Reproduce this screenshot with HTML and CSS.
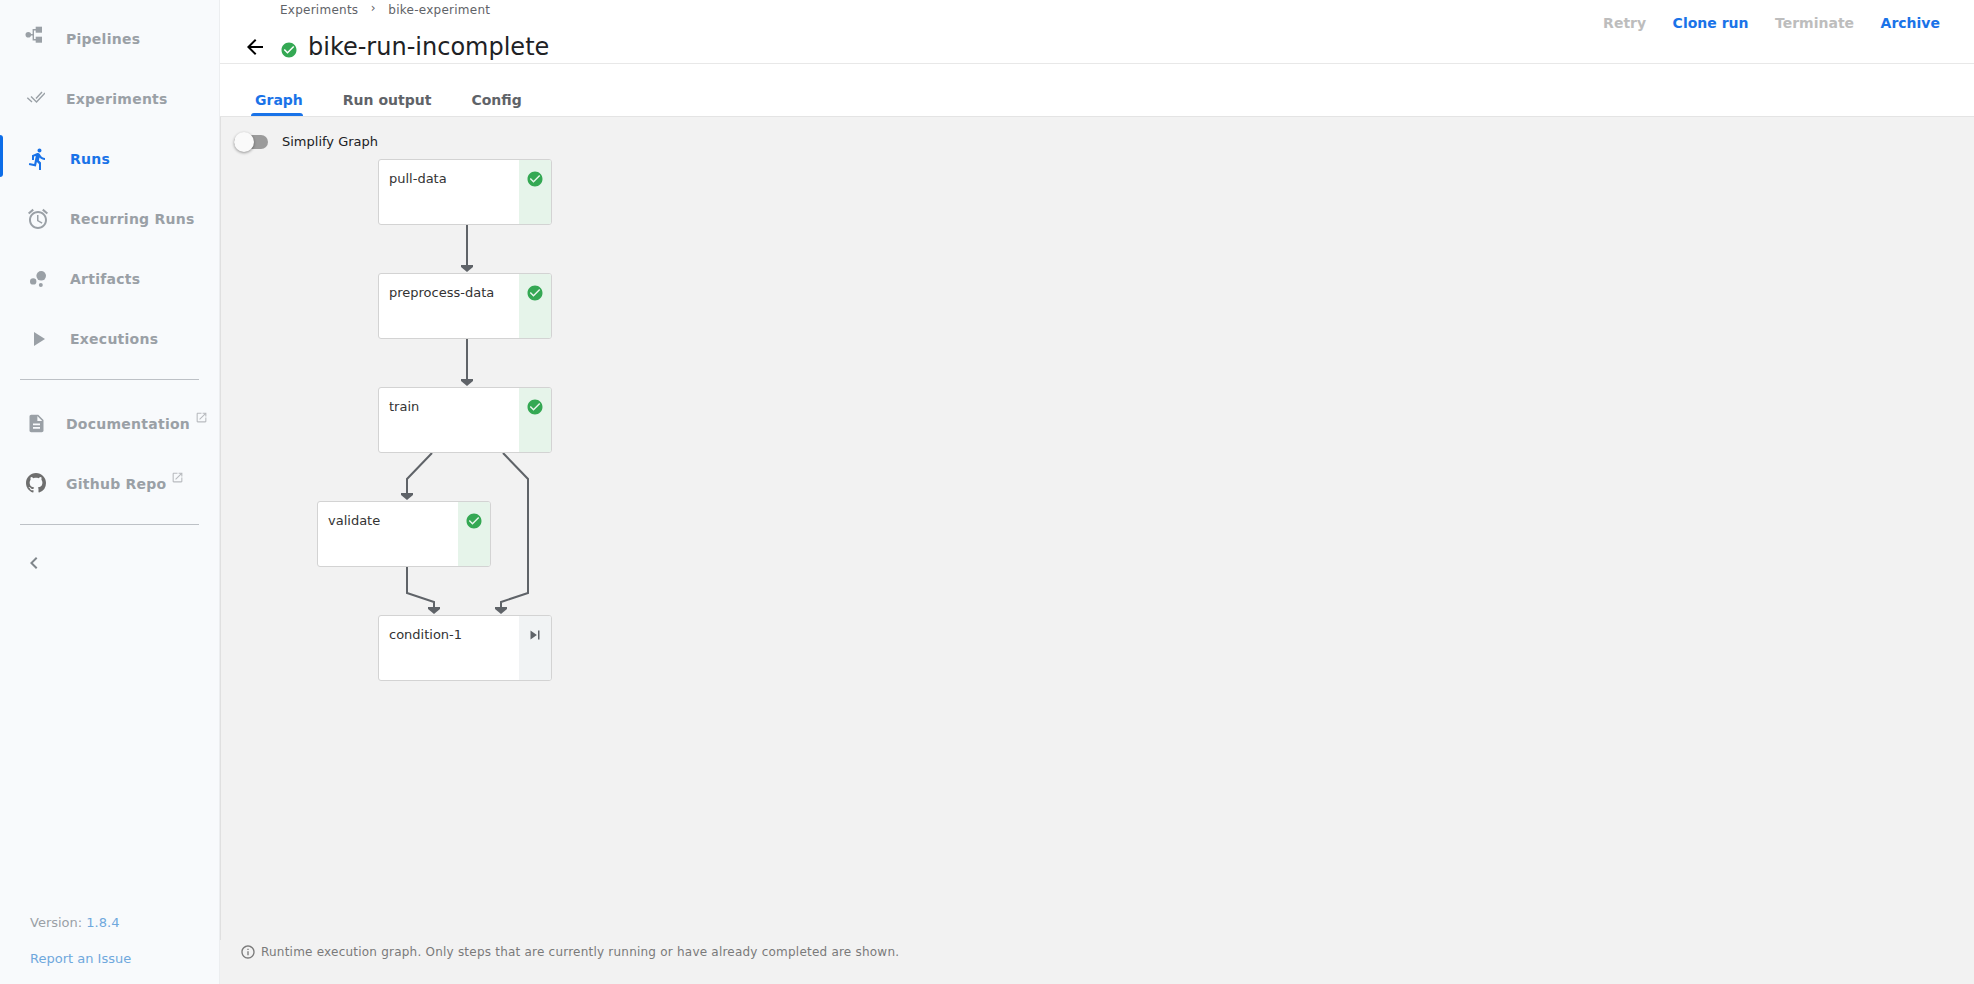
FILE: index.html
```html
<!DOCTYPE html>
<html lang="en">
<head>
<meta charset="utf-8">
<title>bike-run-incomplete</title>
<link rel="stylesheet" href="styles.css">
</head>
<body>
<svg class="defs" width="0" height="0">
  <symbol id="i-check" viewBox="0 0 24 24"><path d="M12 2C6.48 2 2 6.48 2 12s4.48 10 10 10 10-4.48 10-10S17.52 2 12 2zm-2 15l-5-5 1.41-1.41L10 14.17l7.59-7.59L19 8l-9 9z"/></symbol>
  <symbol id="i-open" viewBox="0 0 24 24"><path d="M19 19H5V5h7V3H5c-1.11 0-2 .9-2 2v14c0 1.1.89 2 2 2h14c1.1 0 2-.9 2-2v-7h-2v7zM14 3v2h3.59l-9.83 9.83 1.41 1.41L19 6.41V10h2V3h-7z"/></symbol>
</svg>
<div class="app">
  <nav class="sidebar">
    <a class="nav-item narrow"><span class="nav-icon"><svg class="ic-pipe" viewBox="0 0 20 20"><circle cx="3.3" cy="9.7" r="2.8"/><rect x="10.7" y="1.7" width="6.3" height="6"/><rect x="10.7" y="11.7" width="6.3" height="6"/><path class="wire" d="M6 9.7H8.3M11 4.7H8.3V14.7H11"/></svg></span><span class="nav-label">Pipelines</span></a>
    <a class="nav-item narrow"><span class="nav-icon"><svg class="ic-exp" viewBox="0 0 20 12"><path class="wire" d="M2.3 6.7L7 11M6 5.5L11.5 11L20 2M11 7.5L17 1"/></svg></span><span class="nav-label">Experiments</span></a>
    <a class="nav-item active"><span class="nav-icon"><svg viewBox="0 0 24 24"><path d="M13.49 5.48c1.1 0 2-.9 2-2s-.9-2-2-2-2 .9-2 2 .9 2 2 2zm-3.6 13.9l1-4.4 2.1 2v6h2v-7.5l-2.1-2 .6-3c1.3 1.5 3.3 2.5 5.5 2.5v-2c-1.9 0-3.5-1-4.3-2.4l-1-1.6c-.4-.6-1-1-1.7-1-.3 0-.5.1-.8.1l-5.2 2.2v4.7h2v-3.4l1.8-.7-1.6 8.1-4.9-1-.4 2 7 1.4z"/></svg></span><span class="nav-label">Runs</span></a>
    <a class="nav-item"><span class="nav-icon"><svg viewBox="0 0 24 24"><path d="M22 5.72l-4.6-3.86-1.29 1.53 4.6 3.86L22 5.72zM7.88 3.39L6.6 1.86 2 5.71l1.29 1.53 4.59-3.85zM12.5 8H11v6l4.75 2.85.75-1.23-4-2.37V8zM12 4c-4.97 0-9 4.03-9 9s4.03 9 9 9 9-4.03 9-9-4.03-9-9-9zm0 16c-3.87 0-7-3.13-7-7s3.13-7 7-7 7 3.13 7 7-3.13 7-7 7z"/></svg></span><span class="nav-label">Recurring Runs</span></a>
    <a class="nav-item"><span class="nav-icon"><svg viewBox="0 0 24 24"><circle cx="7.2" cy="14.4" r="3.2"/><circle cx="14.8" cy="18" r="2"/><circle cx="15.2" cy="8.8" r="4.8"/></svg></span><span class="nav-label">Artifacts</span></a>
    <a class="nav-item"><span class="nav-icon"><svg viewBox="0 0 24 24"><path d="M8 5v14l11-7z"/></svg></span><span class="nav-label">Executions</span></a>
    <hr class="nav-rule first">
    <a class="nav-item narrow"><span class="nav-icon"><svg class="ic-doc" viewBox="0 0 24 24"><path d="M14 2H6c-1.1 0-1.99.9-1.99 2L4 20c0 1.1.89 2 1.99 2H18c1.1 0 2-.9 2-2V8l-6-6zm2 16H8v-2h8v2zm0-4H8v-2h8v2zm-3-5V3.5L18.5 9H13z"/></svg></span><span class="nav-label">Documentation</span><svg class="ext"><use href="#i-open"/></svg></a>
    <a class="nav-item narrow"><span class="nav-icon"><svg class="ic-gh" viewBox="0 0 16 16"><path d="M8 0C3.58 0 0 3.58 0 8c0 3.54 2.29 6.53 5.47 7.59.4.07.55-.17.55-.38 0-.19-.01-.82-.01-1.49-2.01.37-2.53-.49-2.69-.94-.09-.23-.48-.94-.82-1.13-.28-.15-.68-.52-.01-.53.63-.01 1.08.58 1.23.82.72 1.21 1.87.87 2.33.66.07-.52.28-.87.51-1.07-1.78-.2-3.64-.89-3.64-3.95 0-.87.31-1.59.82-2.15-.08-.2-.36-1.02.08-2.12 0 0 .67-.21 2.2.82.64-.18 1.32-.27 2-.27.68 0 1.36.09 2 .27 1.53-1.04 2.2-.82 2.2-.82.44 1.1.16 1.92.08 2.12.51.56.82 1.27.82 2.15 0 3.07-1.87 3.75-3.65 3.95.29.25.54.73.54 1.48 0 1.07-.01 1.93-.01 2.2 0 .21.15.46.55.38A8.013 8.013 0 0016 8c0-4.42-3.58-8-8-8z"/></svg></span><span class="nav-label">Github Repo</span><svg class="ext"><use href="#i-open"/></svg></a>
    <hr class="nav-rule second">
    <button class="collapse"><svg viewBox="0 0 24 24"><path d="M15.41 7.41L14 6l-6 6 6 6 1.41-1.41L10.83 12z"/></svg></button>
    <div class="side-foot">
      <div class="version">Version: <a class="soft-link">1.8.4</a></div>
      <a class="soft-link">Report an Issue</a>
    </div>
  </nav>
  <main class="main">
    <header class="page-head">
      <div class="head-left">
        <div class="crumbs"><span>Experiments</span><span class="crumb-sep">›</span><span>bike-experiment</span></div>
        <div class="title-row">
          <svg class="back" viewBox="0 0 24 24"><path d="M20 11H7.83l5.59-5.59L12 4l-8 8 8 8 1.41-1.41L7.83 13H20v-2z"/></svg>
          <svg class="title-status"><use href="#i-check"/></svg>
          <h1 class="title">bike-run-incomplete</h1>
        </div>
      </div>
      <div class="actions">
        <span class="act off">Retry</span>
        <span class="act on">Clone run</span>
        <span class="act off">Terminate</span>
        <span class="act on">Archive</span>
      </div>
    </header>
    <div class="tabs">
      <span class="tab current">Graph</span>
      <span class="tab">Run output</span>
      <span class="tab">Config</span>
    </div>
    <section class="graph">
      <div class="toggle-row">
        <span class="toggle"><span class="thumb"></span></span>
        <span class="toggle-label">Simplify Graph</span>
      </div>
      <svg class="edges" width="400" height="520" viewBox="220 117 400 520">
        <g class="lines">
          <path d="M467 225V266"/>
          <path d="M467 339V380"/>
          <path d="M432 453L407 479V494"/>
          <path d="M503 453L528 479V593L501 602V608"/>
          <path d="M407 566V593L434 602V608"/>
        </g>
        <g class="heads">
          <path d="M461 265h12v2l-6 5-6-5z"/>
          <path d="M461 379h12v2l-6 5-6-5z"/>
          <path d="M401 493h12v2l-6 5-6-5z"/>
          <path d="M428 607h12v2l-6 5-6-5z"/>
          <path d="M495 607h12v2l-6 5-6-5z"/>
        </g>
      </svg>
      <div class="node n1"><span class="node-name">pull-data</span><span class="node-state ok"><svg><use href="#i-check"/></svg></span></div>
      <div class="node n2"><span class="node-name">preprocess-data</span><span class="node-state ok"><svg><use href="#i-check"/></svg></span></div>
      <div class="node n3"><span class="node-name">train</span><span class="node-state ok"><svg><use href="#i-check"/></svg></span></div>
      <div class="node n4"><span class="node-name">validate</span><span class="node-state ok"><svg><use href="#i-check"/></svg></span></div>
      <div class="node n5"><span class="node-name">condition-1</span><span class="node-state skip"><svg viewBox="0 0 24 24"><path d="M6 18l8.5-6L6 6v12zM16 6v12h2V6h-2z"/></svg></span></div>
      <div class="graph-note">
        <svg viewBox="0 0 24 24"><path d="M11 7h2v2h-2zm0 4h2v6h-2zm1-9C6.48 2 2 6.48 2 12s4.48 10 10 10 10-4.48 10-10S17.52 2 12 2zm0 18c-4.41 0-8-3.59-8-8s3.59-8 8-8 8 3.59 8 8-3.59 8-8 8z"/></svg>
        <span>Runtime execution graph. Only steps that are currently running or have already completed are shown.</span>
      </div>
    </section>
  </main>
</div>
</body>
</html>
```
FILE: styles.css
```css
* { box-sizing: border-box; }
html, body { margin: 0; height: 100%; overflow: hidden; }
body { font-family: "DejaVu Sans", sans-serif; color: #202124; background: #fff; }
.defs { position: absolute; }
.app { display: flex; height: 984px; }

/* sidebar */
.sidebar { width: 220px; flex: none; display: flex; flex-direction: column; background: #f8fafc; border-right: 1px solid #eceef0; padding-top: 9px; }
.nav-item { position: relative; display: flex; align-items: center; height: 60px; padding-left: 26px; color: #9aa0a6; font-size: 14px; font-weight: 700; letter-spacing: .25px; }
.nav-icon { width: 44px; flex: none; display: flex; }
.nav-icon svg { width: 24px; height: 24px; fill: #9aa0a6; }
.nav-item.narrow { padding-left: 25px; }
.nav-item.narrow .nav-icon { width: 41px; }
.nav-icon .wire { fill: none; stroke: #9aa0a6; stroke-width: 1.4; }
.nav-icon .ic-pipe { width: 20px; height: 20px; margin-top: -8px; }
.nav-icon .ic-exp { width: 20px; height: 12px; margin-top: -4px; }
.nav-icon .ic-doc { width: 21px; height: 21px; margin: -2px 0 0 1px; }
.nav-icon .ic-gh { width: 20px; height: 20px; margin: -2px 0 0 1px; fill: #6e6e6e; }
.nav-item.active { color: #1a73e8; }
.nav-item.active .nav-icon svg { fill: #1a73e8; }
.nav-item.active::before { content: ""; position: absolute; left: 0; top: 6px; width: 3px; height: 42px; background: #0d6de8; border-radius: 0 3px 3px 0; }
.ext { width: 13px; height: 13px; fill: #b8bbbf; margin: -14px 0 0 5px; }
.nav-rule { height: 1px; border: 0; background: #bdc1c6; margin: 10px 20px 14px 20px; flex: none; }
.nav-rule.second { margin-top: 10px; margin-bottom: 0; }
.collapse { border: 0; background: none; padding: 0; margin: 26px 0 0 22px; width: 24px; height: 24px; align-self: flex-start; }
.collapse svg { width: 24px; height: 24px; fill: #80868b; }
.side-foot { margin-top: auto; padding: 0 0 18px 30px; font-size: 13px; color: #9aa0a6; }
.version { margin-bottom: 21px; }
.soft-link { color: #6fa8dc; }

/* main */
.main { flex: 1; min-width: 0; display: flex; flex-direction: column; }
.page-head { height: 64px; flex: none; display: flex; justify-content: space-between; border-bottom: 1px solid #e8e8e8; }
.head-left { display: flex; flex-direction: column; }
.crumbs { display: flex; padding: 1px 0 0 60px; font-size: 12px; letter-spacing: .25px; line-height: 18px; color: #5f6368; }
.crumb-sep { width: 30px; text-align: center; margin-top: -2px; }
.title-row { display: flex; align-items: center; padding: 12px 0 0 23px; }
.back { width: 24px; height: 24px; fill: #000; }
.title-status { width: 18px; height: 18px; fill: #34a853; margin: 5px 0 0 13px; }
.title { margin: 0 0 0 10px; font-size: 24px; font-weight: 400; line-height: 32px; color: #202124; }
.actions { display: flex; gap: 26.5px; padding: 14px 34px 0 0; font-size: 14px; font-weight: 700; line-height: 18px; }
.act.off { color: #bdbdbd; }
.act.on { color: #1a73e8; }

.tabs { height: 52px; flex: none; display: flex; gap: 40px; padding: 26px 0 0 35px; font-size: 14px; font-weight: 700; color: #5f6368; }
.tab { line-height: 20px; }
.tab.current { color: #1a73e8; position: relative; }
.tab.current::after { content: ""; position: absolute; left: -4px; right: 0; bottom: 0; height: 3px; background: #1a73e8; border-radius: 3px 3px 0 0; }

/* graph */
.graph { position: relative; flex: 1; background: #f2f2f2; border-top: 1px solid #e4e4e4; }
.graph::before { content: ""; position: absolute; left: 0; top: 0; bottom: 44px; width: 1px; background: #e0e0e0; }
.toggle-row { display: flex; align-items: center; padding: 17px 0 0 14px; }
.toggle { position: relative; display: block; width: 34px; height: 14px; border-radius: 7px; background: #9b9b9b; }
.thumb { position: absolute; left: 0; top: -3px; width: 20px; height: 20px; border-radius: 50%; background: #fafafa; box-shadow: 0 1px 3px rgba(0,0,0,.4); }
.toggle-label { margin-left: 14px; font-size: 13px; color: #202124; }
.edges { position: absolute; left: 0; top: 0; }
.lines path { fill: none; stroke: #5f6368; stroke-width: 2; }
.heads path { fill: #5f6368; }
.node { position: absolute; width: 174px; height: 66px; display: flex; background: #fff; border: 1px solid #d3d3d3; border-radius: 3px; overflow: hidden; }
.n1 { left: 158px; top: 42px; }
.n2 { left: 158px; top: 156px; }
.n3 { left: 158px; top: 270px; }
.n4 { left: 97px; top: 384px; }
.n5 { left: 158px; top: 498px; }
.node-name { flex: 1; padding: 10px 0 0 10px; font-size: 13px; line-height: 18px; color: #333; }
.node-state { width: 32px; flex: none; display: flex; justify-content: center; padding-top: 10px; }
.node-state svg { width: 18px; height: 18px; }
.node-state.ok { background: #e6f4ea; }
.node-state.ok svg { fill: #34a853; }
.node-state.skip { background: #f1f3f4; }
.node-state.skip svg { width: 18px; height: 18px; fill: #5f6368; }
.graph-note { position: absolute; left: 20px; top: 827px; display: flex; align-items: center; gap: 5px; font-size: 12px; letter-spacing: .22px; color: #7a7a7a; }
.graph-note svg { width: 16px; height: 16px; fill: #7a7a7a; }
```
